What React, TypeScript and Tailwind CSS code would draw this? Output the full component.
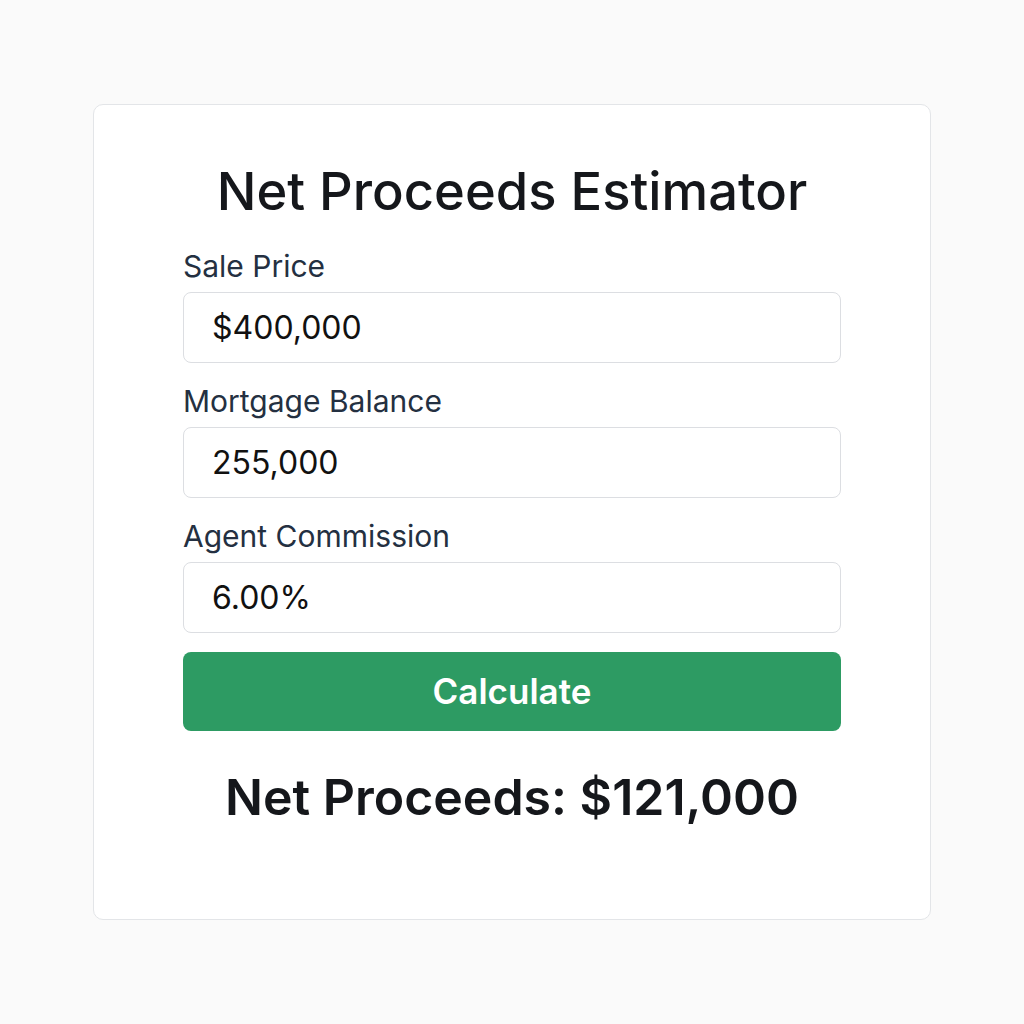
import React from "react";

const fields = [
  { label: "Sale Price", value: "$400,000" },
  { label: "Mortgage Balance", value: "255,000" },
  { label: "Agent Commission", value: "6.00%" },
];

export default function App() {
  return (
    <div
      className="w-[1024px] h-[1024px] bg-[#fafafa] pt-[104px] pl-[93px]"
      style={{ fontFamily: "Inter, 'Noto Sans', sans-serif" }}
    >
      <div className="w-[838px] h-[816px] bg-white border border-[#e3e5e8] rounded-[10px] px-[89px] pt-[55px]">
        <h1 className="text-center text-[52.5px] leading-[62px] font-medium text-[#15171b]">
          Net Proceeds Estimator
        </h1>
        <div className="mt-[28px] flex flex-col gap-[22px]">
          {fields.map((f) => (
            <div key={f.label} className="flex flex-col gap-[10px]">
              <label className="text-[30px] leading-[32px] text-[#243041]">{f.label}</label>
              <div className="h-[71px] border border-[#dcdee2] rounded-[8px] flex items-center px-[28px] text-[32px] text-[#111111]">
                {f.value}
              </div>
            </div>
          ))}
        </div>
        <button className="mt-[19px] w-full h-[79px] rounded-[8px] bg-[#2d9b63] text-white text-[35px] font-semibold flex items-center justify-center">
          Calculate
        </button>
        <div className="mt-[38px] text-center text-[50px] leading-[56px] font-semibold text-[#15171b]">
          Net Proceeds: $121,000
        </div>
      </div>
    </div>
  );
}
